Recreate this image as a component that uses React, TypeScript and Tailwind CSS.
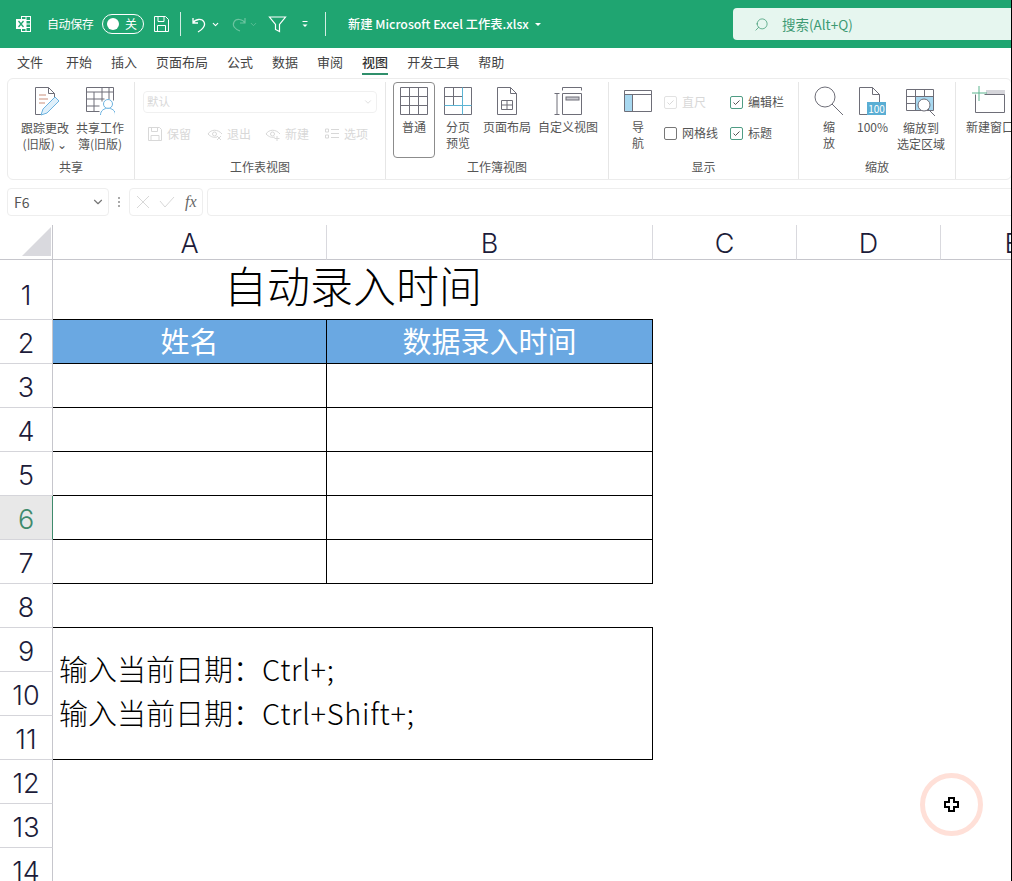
import { ChevronDown, Search } from "lucide-react";

const font = "font-['Noto_Sans_CJK_SC','Noto_Sans',sans-serif]";

const tabs = ["文件", "开始", "插入", "页面布局", "公式", "数据", "审阅", "视图", "开发工具", "帮助"];

const TitleBar = () => (
  <div className="h-12 bg-[#1fa571] flex items-center text-white shrink-0">
    <svg width="17" height="18" viewBox="0 0 17 18" className="ml-[15px] shrink-0" fill="none" stroke="#fff">
      <rect x="6.500" y="1.500" width="9" height="15" />
      <path d="M6.500 5.500h9M6.500 9h9M6.500 12.500h9M11 1.500v15" />
      <rect x="1" y="4" width="10" height="10" fill="#fff" stroke="none" />
      <path d="M3.500 6l5 6M8.500 6l-5 6" stroke="#1fa571" strokeWidth="1.300" />
    </svg>
    <span className="ml-[15px] text-[12px] tracking-[-0.4px] w-[42px] whitespace-nowrap shrink-0">自动保存</span>
    <div className="ml-[13px] w-[42px] h-[20px] rounded-full border border-white flex items-center pl-[4px] shrink-0">
      <div className="w-[12px] h-[12px] rounded-full bg-white" />
      <span className="ml-[6px] text-[12px] leading-none">关</span>
    </div>
    <svg width="17" height="18" viewBox="0 0 17 18" className="ml-[9px] shrink-0" fill="none" stroke="#fff">
      <path d="M1.500 1.500h11l3 3v12h-14zM5 1.500v5h6v-5M4.500 16.500v-6h8v6" />
    </svg>
    <div className="ml-[10px] w-px h-[24px] bg-white/80 shrink-0" />
    <svg width="16" height="18" viewBox="0 0 16 18" className="ml-[10px] shrink-0" fill="none" stroke="#fff" strokeWidth="1.300">
      <path d="M2 3v5h5M2 8c2-4 9-5 11-1s-1 7-6 10" />
    </svg>
    <ChevronDown size={9} strokeWidth={3} className="ml-[4px] shrink-0" />
    <svg width="16" height="18" viewBox="0 0 16 18" className="ml-[11px] shrink-0" fill="none" stroke="#6cc4a0" strokeWidth="1.200">
      <path d="M14 3v5H9M14 8c-2-4-9-5-11-1s1 7 6 9" />
    </svg>
    <ChevronDown size={9} strokeWidth={2} className="ml-[2px] text-[#6cc4a0] shrink-0" />
    <svg width="19" height="18" viewBox="0 0 19 18" className="ml-[10px] shrink-0" fill="none" stroke="#fff" strokeWidth="1.200">
      <path d="M1.500 2h16L11.500 9.500v7l-4-2v-5z" />
    </svg>
    <svg width="8" height="8" viewBox="0 0 8 8" className="ml-[14px] shrink-0" fill="none" stroke="#fff">
      <path d="M1.500 1.500h5" />
      <path d="M1.500 4.500h5l-2.500 2.500z" fill="#fff" stroke="none" />
    </svg>
    <div className="ml-[16px] w-px h-[24px] bg-white/80 shrink-0" />
    <span className="ml-[22px] text-[12.300px] font-medium whitespace-nowrap shrink-0">新建 Microsoft Excel 工作表.xlsx</span>
    <div className="ml-[6px] w-0 h-0 border-x-[3px] border-x-transparent border-t-[3px] border-t-white shrink-0" />
    <div className="ml-auto w-[279px] h-[32px] rounded-l-[4px] bg-[#e6f6ef] flex items-center text-[#3d9a73] shrink-0">
      <Search size={15} strokeWidth={1.200} className="ml-[21px] -scale-x-100" />
      <span className="ml-[13px] text-[13.500px]">搜索(Alt+Q)</span>
    </div>
  </div>
);

const TabBar = () => (
  <div className="h-[30px] flex items-start text-[13px] text-[#444] pl-[17px] shrink-0">
    {tabs.map((t) => (
      <div
        key={t}
        className={`relative h-[28px] leading-[28px] ${t === "文件" ? "mr-[23px]" : "mr-[19px]"} ${
          t === "视图" ? "text-[#333] font-medium" : ""
        }`}
      >
        {t}
        {t === "视图" && <div className="absolute left-0 right-0 bottom-[1px] h-[2px] bg-[#2f8f6b]" />}
      </div>
    ))}
  </div>
);

const Label = ({ children, w }: { children: React.ReactNode; w: string }) => (
  <div className={`${w} text-center text-[12px] leading-[16px] text-[#555] mt-[4px] whitespace-nowrap`}>{children}</div>
);

const Group = ({ w, title, children }: { w: string; title: string; children: React.ReactNode }) => (
  <div className={`${w} shrink-0 h-full flex flex-col border-r border-[#e6e6e6]`}>
    <div className="flex-1 flex min-h-0">{children}</div>
    <div className="h-[20px] text-center text-[12px] leading-[16px] text-[#555]">{title}</div>
  </div>
);

const gray = "#6e6e78";

const DisabledItem = ({ children, label, w }: { children: React.ReactNode; label: string; w: string }) => (
  <div className={`${w} flex items-center text-[12px] text-[#d8d8d8] gap-[4px]`}>
    {children}
    <span>{label}</span>
  </div>
);

const Check = ({ checked = true, disabled = false, label }: { checked?: boolean; disabled?: boolean; label: string }) => (
  <div className="flex items-center gap-[5px] text-[12px] text-[#555] h-[18px] whitespace-nowrap">
    <div
      className={`w-[13px] h-[13px] rounded-[2px] border flex items-center justify-center ${
        disabled ? "border-[#e2e2e2]" : checked ? "border-[#4f9c84]" : "border-[#777]"
      }`}
    >
      {checked && (
        <svg width="9" height="9" viewBox="0 0 9 9" fill="none" stroke={disabled ? "#d8d8d8" : "#555"}>
          <path d="M1.500 4.500l2 2 4-4" />
        </svg>
      )}
    </div>
    <span className={disabled ? "text-[#d8d8d8]" : ""}>{label}</span>
  </div>
);

const Ribbon = () => (
  <div className="h-[102px] ml-[7px] flex shrink-0 border border-[#ececec] rounded-[6px] pt-[3px] overflow-hidden">
    <Group w="w-[127px]" title="共享">
      <div className="ml-[11px] w-[52px] flex flex-col items-center pt-[1px] shrink-0">
        <svg width="30" height="30" viewBox="0 0 30 30" className="ml-[5px] mt-[3px]" fill="none" stroke={gray}>
          <path d="M2.500 1.500h13l6 6v8M15.500 1.500v6h6M2.500 1.500v27h6" />
          <path d="M6 9h7M6 13h9M6 17h6" stroke="#c98f7a" />
          <path d="M8 29l2-6L22 11l4 4-12 12z" stroke="#6db3e0" fill="#dff0fb" />
        </svg>
        <Label w="w-[52px]">跟踪更改<br />(旧版) ⌄</Label>
      </div>
      <div className="ml-[3px] w-[52px] flex flex-col items-center pt-[1px] shrink-0">
        <svg width="30" height="30" viewBox="0 0 30 30" className="mt-[3px]" fill="none" stroke={gray}>
          <path d="M1.500 1.500h27v13M1.500 1.500v24h13M1.500 6h27M1.500 13h18M1.500 20h13M9 6v19M17 1.500v14M24 1.500v12" />
          <circle cx="23" cy="18" r="4.500" stroke="#6db3e0" fill="#fff" />
          <path d="M15.500 29c0-9 15-9 15 0" stroke="#6db3e0" fill="#fff" />
        </svg>
        <Label w="w-[52px]">共享工作<br />簿(旧版)</Label>
      </div>
    </Group>
    <Group w="w-[251px]" title="工作表视图">
      <div className="flex flex-col pl-[8px] pt-[9px]">
        <div className="w-[234px] h-[22px] border border-[#f0f0f0] rounded-[4px] flex items-center justify-between px-[3px] text-[11.500px] text-[#d8d8d8]">
          默认
          <ChevronDown size={10} />
        </div>
        <div className="flex mt-[10px] pl-[4px] h-[22px]">
          <DisabledItem w="w-[60px]" label="保留">
            <svg width="16" height="16" viewBox="0 0 16 16" fill="none" stroke="#d8d8d8">
              <path d="M1.500 1.500h11l2 2v11h-13zM4.500 1.500v4h6v-4M4 14.500v-5h8v5" />
            </svg>
          </DisabledItem>
          <DisabledItem w="w-[58px]" label="退出">
            <svg width="16" height="16" viewBox="0 0 16 16" fill="none" stroke="#d8d8d8">
              <path d="M1 8c3-5 10-5 14 0M1 8c3 3 6 4 9 3" />
              <circle cx="7.500" cy="8" r="2" />
              <path d="M10 10l4 4M14 10l-4 4" />
            </svg>
          </DisabledItem>
          <DisabledItem w="w-[59px]" label="新建">
            <svg width="16" height="16" viewBox="0 0 16 16" fill="none" stroke="#d8d8d8">
              <path d="M1 8c3-5 10-5 14 0M1 8c3 3 6 4 9 3" />
              <circle cx="7.500" cy="8" r="2" />
              <path d="M12 10v5M9.500 12.500h5" />
            </svg>
          </DisabledItem>
          <DisabledItem w="w-[50px]" label="选项">
            <svg width="16" height="16" viewBox="0 0 16 16" fill="none" stroke="#d8d8d8">
              <path d="M1.500 3h3v3h-3zM1.500 9h3v3h-3zM7 3.500h8M7 7.500h8M7 11.500h8" />
            </svg>
          </DisabledItem>
        </div>
      </div>
    </Group>
    <Group w="w-[223px]" title="工作簿视图">
      <div className="ml-[7px] w-[42px] h-[76px] border border-[#8c8c8c] rounded-[4px] flex flex-col items-center pt-[4px] shrink-0">
        <svg width="28" height="28" viewBox="0 0 28 28" fill="none" stroke={gray}>
          <path d="M.500.500h27v27H.500zM.500 9.500h27M.500 18.500h27M9.500.500v27M18.500.500v27" />
        </svg>
        <Label w="w-[40px]">普通</Label>
      </div>
      <div className="w-[46px] flex flex-col items-center pt-[5px] shrink-0">
        <svg width="28" height="28" viewBox="0 0 28 28" fill="none" stroke={gray}>
          <path d="M.500.500h27v27H.500zM.500 9.500h18M9.500.500v18" />
          <path d="M18.500.500v27M.500 18.500h27" stroke="#5bb4d4" />
        </svg>
        <Label w="w-[40px]">分页<br />预览</Label>
      </div>
      <div className="ml-[1px] w-[50px] flex flex-col items-center pt-[5px] shrink-0">
        <svg width="22" height="28" viewBox="0 0 22 28" fill="none" stroke={gray}>
          <path d="M1.500.500h13l6 6v21h-19zM14.500.500v6h6" />
          <path d="M5.500 13.500h11v9h-11zM5.500 18h11M11 13.500v9" />
        </svg>
        <Label w="w-[50px]">页面布局</Label>
      </div>
      <div className="ml-[2px] w-[68px] flex flex-col items-center pt-[5px] shrink-0">
        <svg width="28" height="28" viewBox="0 0 28 28" fill="none" stroke={gray}>
          <path d="M8.500.500h19M8.500.500v3M27.500.500v3M.500 6.500h5M.500 27.500h5M3 6.500v21M8.500 6.500h19v21h-19z" />
          <rect x="12" y="10" width="13" height="3" fill="#c9c9cf" />
        </svg>
        <Label w="w-[68px]">自定义视图</Label>
      </div>
    </Group>
    <Group w="w-[190px]" title="显示">
      <div className="ml-[15px] w-[28px] flex flex-col items-center pt-[8px] shrink-0">
        <svg width="28" height="22" viewBox="0 0 28 22" fill="none" stroke={gray} className="mb-[3px]">
          <rect x=".5" y="4" width="8" height="17" fill="#a8d8f0" stroke="none" />
          <path d="M.500.500h27v21H.500zM.500 4.500h27M8.500 4.500v17" />
        </svg>
        <Label w="w-[28px]">导<br />航</Label>
      </div>
      <div className="ml-[12px] flex flex-col pt-[11px] gap-[13px] w-[66px] shrink-0">
        <Check disabled label="直尺" />
        <Check checked={false} label="网格线" />
      </div>
      <div className="flex flex-col pt-[11px] gap-[13px]">
        <Check label="编辑栏" />
        <Check label="标题" />
      </div>
    </Group>
    <Group w="w-[157px]" title="缩放">
      <div className="ml-[15px] w-[30px] flex flex-col items-center pt-[4px] shrink-0">
        <svg width="30" height="30" viewBox="0 0 30 30" fill="none" stroke={gray} className="mb-[-1px]">
          <circle cx="11" cy="11" r="10" />
          <path d="M18 18l11 11" />
        </svg>
        <Label w="w-[20px]">缩<br />放</Label>
      </div>
      <div className="ml-[13px] w-[30px] flex flex-col items-center pt-[5px] shrink-0">
        <div className="relative w-[28px] h-[28px]">
          <svg width="28" height="28" viewBox="0 0 28 28" fill="none" stroke={gray}>
            <path d="M1.500.500h13l7 7v20h-20zM14.500.500v7h7" />
          </svg>
          <div className="absolute right-0 bottom-0 w-[19px] h-[13px] bg-[#5aaed4] text-white text-[10px] leading-[13px] text-center">100</div>
        </div>
        <Label w="w-[30px]">100%</Label>
      </div>
      <div className="ml-[8px] w-[52px] flex flex-col items-center pt-[7px] shrink-0">
        <svg width="30" height="27" viewBox="0 0 30 27" fill="none" stroke={gray}>
          <rect x="9" y="7" width="18" height="14" fill="#a8d8f0" stroke="none" />
          <path d="M.500.500h27v21H.500zM.500 7.500h27M.500 14.500h9M9.500.500v21M18.500.500v7" />
          <circle cx="18" cy="16" r="6" fill="#fff" />
          <path d="M22 20l7 7" />
        </svg>
        <Label w="w-[52px]">缩放到<br />选定区域</Label>
      </div>
    </Group>
    <div className="w-[60px] shrink-0 flex flex-col pl-[10px] pt-[3px]">
      <svg width="40" height="28" viewBox="0 0 40 28" fill="none" stroke={gray}>
        <rect x="20" y="5" width="19" height="4" fill="#d5d5da" stroke="none" />
        <path d="M9.500 9.500v18h29v-18h-20" />
        <path d="M6 8h15M13 1v15" stroke="#5cb58f" />
      </svg>
      <div className="w-[60px] text-[12px] leading-[16px] text-[#555] mt-[6px] whitespace-nowrap">新建窗口</div>
    </div>
  </div>
);

const FormulaBar = () => (
  <div className="h-[28px] mt-[8px] ml-[7px] flex items-center shrink-0">
    <div className="w-[102px] h-full border border-[#eeeeee] rounded-[4px] flex items-center justify-between pl-[6px] pr-[3px] text-[14px] text-[#555]">
      F6
      <ChevronDown size={14} className="text-[#777]" />
    </div>
    <div className="w-[20px] flex flex-col items-center gap-[2px]">
      <div className="w-[2px] h-[2px] bg-[#aaa]" />
      <div className="w-[2px] h-[2px] bg-[#aaa]" />
      <div className="w-[2px] h-[2px] bg-[#aaa]" />
    </div>
    <div className="w-[74px] h-full border border-[#eeeeee] rounded-[4px] flex items-center pl-[6px]">
      <svg width="14" height="14" viewBox="0 0 14 14" fill="none" stroke="#d8d8d8">
        <path d="M1 1l12 12M13 1L1 13" />
      </svg>
      <svg width="16" height="14" viewBox="0 0 16 14" fill="none" stroke="#d8d8d8" className="ml-[9px]">
        <path d="M1 6l5 6L15 2" />
      </svg>
      <span className="ml-[10px] italic font-['Liberation_Serif',serif] text-[16px] text-[#666]">fx</span>
    </div>
    <div className="ml-[4px] flex-1 h-full border border-[#eeeeee] rounded-l-[4px]" />
  </div>
);

const rowHeights = [60, 44, 44, 44, 44, 44, 44, 44, 44, 44, 44, 44, 44, 44];

const colHead = "h-[35px] border-r border-[#d9d9de] border-b border-b-[#c6c6cc] flex items-end justify-center text-[27px] leading-[30px] text-[#1c1c3a] font-['Inter',sans-serif] font-light";

const dataRows = [3, 4, 5, 6, 7];

const Sheet = () => (
  <div
    className={`mt-[9px] grid grid-cols-[53px_274px_326px_144px_144px_144px] ${font}`}
    style={{ gridTemplateRows: `35px ${rowHeights.map((h) => h + "px").join(" ")}` }}
  >
    {/* column headers */}
    <div className="h-[35px] border-r border-[#c6c6cc] border-b border-b-[#c6c6cc] relative overflow-hidden">
      <div className="absolute right-[1px] bottom-[3px] w-0 h-0 border-l-[29px] border-l-transparent border-b-[29px] border-b-[#d9d9de]" />
    </div>
    {["A", "B", "C", "D", "E"].map((c) => (
      <div key={c} className={colHead}>{c}</div>
    ))}

    {/* row numbers */}
    {rowHeights.map((_, i) => (
      <div
        key={i}
        style={{ gridRow: i + 2, gridColumn: 1 }}
        className={`border-r border-[#c6c6cc] border-b border-b-[#d5d5da] flex items-end justify-center text-[27px] leading-[32px] font-['Inter',sans-serif] font-light ${
          i === 0 ? "pb-[7px]" : "pb-[3px]"
        } ${i === 5 ? "bg-[#e8e8e8] text-[#3f8a6c] border-r-[#3f8a6c]" : "text-[#1c1c3a]"}`}
      >
        {i + 1}
      </div>
    ))}

    {/* title, its bottom line is the table's top edge */}
    <div className="col-start-2 col-span-2 row-start-2 border-b border-black flex items-center justify-center text-[43px] font-light text-black leading-[56px] pb-[11px]">
      自动录入时间
    </div>

    {/* table header */}
    <div className="col-start-2 row-start-3 bg-[#6aa8e2] border-r border-b border-black text-white text-[29px] leading-[40px] text-center">
      姓名
    </div>
    <div className="col-start-3 row-start-3 bg-[#6aa8e2] border-r border-b border-black text-white text-[29px] leading-[40px] text-center">
      数据录入时间
    </div>

    {/* table rows */}
    {dataRows.map((r) => (
      <div key={r} className="contents">
        <div style={{ gridRow: r + 1, gridColumn: 2 }} className="border-r border-b border-black" />
        <div style={{ gridRow: r + 1, gridColumn: 3 }} className="border-r border-b border-black" />
      </div>
    ))}

    {/* row 8, its bottom line is the note box's top edge */}
    <div style={{ gridRow: 9, gridColumn: "2 / span 2" }} className="border-b border-black" />

    {/* note box */}
    <div
      style={{ gridRow: "10 / span 3", gridColumn: "2 / span 2" }}
      className="border-r border-b border-black pl-[6px] pt-[18px] text-[29px] font-light leading-[44px] text-black whitespace-nowrap"
    >
      <div>输入当前日期：<span className="tracking-[0.7px]">Ctrl+;</span></div>
      <div>输入当前日期：<span className="tracking-[0.7px]">Ctrl+Shift+;</span></div>
    </div>
  </div>
);

const Cursor = () => (
  <div className="absolute left-[920px] top-[773px] w-[63px] h-[63px] rounded-full border-[5px] border-[#ffe0d8] flex items-center justify-center">
    <svg width="15" height="15" viewBox="0 0 15 15">
      <path d="M5 1h5v4h4v5h-4v4H5v-4H1V5h4z" fill="#fff" stroke="#000" strokeWidth="2" />
    </svg>
  </div>
);

export default function App() {
  return (
    <div className={`relative w-[1012px] h-[881px] overflow-hidden bg-white flex flex-col ${font}`}>
      <TitleBar />
      <TabBar />
      <Ribbon />
      <FormulaBar />
      <Sheet />
      <Cursor />
      <div className="absolute right-0 top-0 bottom-0 w-px bg-black" />
    </div>
  );
}
